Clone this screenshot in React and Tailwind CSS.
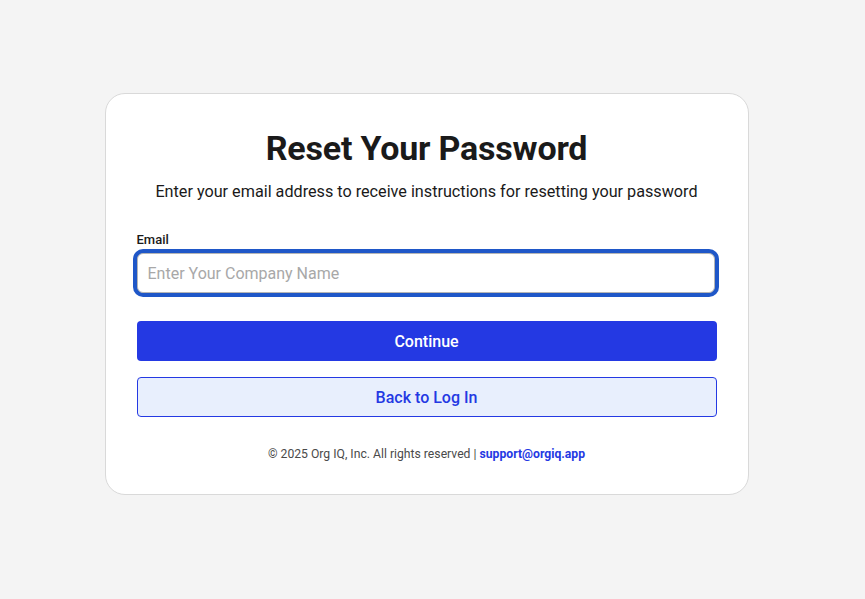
export default function App() {
	return (
		<div className="min-h-[599px] w-full bg-[#f4f4f4] flex justify-center pt-[93px]" style={{ fontFamily: 'Roboto, "Liberation Sans", sans-serif' }}>
			<div className="mr-[12px] w-[644px] h-[402px] bg-white border border-[#d9d9d9] rounded-[20px] px-[31px] pt-[33px]">
				<h1 className="text-center text-[34px] leading-[42px] font-bold text-[#1a1a1a] tracking-[-0.2px]">Reset Your Password</h1>
				<p className="text-center text-[16.2px] leading-[24px] text-[#1a1a1a] mt-[11px]">
					Enter your email address to receive instructions for resetting your password
				</p>
				<div className="mt-[28px]">
					<label className="block text-[13px] leading-[16px] font-medium text-[#1a1a1a]">Email</label>
					<div className="pr-[2px]">
						<input
							type="text"
							placeholder="Enter Your Company Name"
							className="mt-[5px] block w-full h-[40px] px-[10px] text-[16px] rounded-[6px] border border-[#b5b5b5] outline-none ring-[4px] ring-[#1f57c8] placeholder:text-[#a8a8a8] bg-white"
						/>
					</div>
				</div>
				<button className="mt-[28px] w-full h-[40px] rounded-[4px] bg-[#2439e3] text-white text-[16px] font-medium pt-[2px]">
					Continue
				</button>
				<button className="mt-[16px] w-full h-[40px] rounded-[4px] bg-[#e8effd] border border-[#2439e3] text-[#2439e3] text-[16px] font-medium pt-[2px]">
					Back to Log In
				</button>
				<p className="text-center text-[12.2px] leading-[16px] text-[#4a4a4a] mt-[29px]">
					© 2025 Org IQ, Inc. All rights reserved | <a className="font-bold text-[#2439e3]">support@orgiq.app</a>
				</p>
			</div>
		</div>
	)
}
